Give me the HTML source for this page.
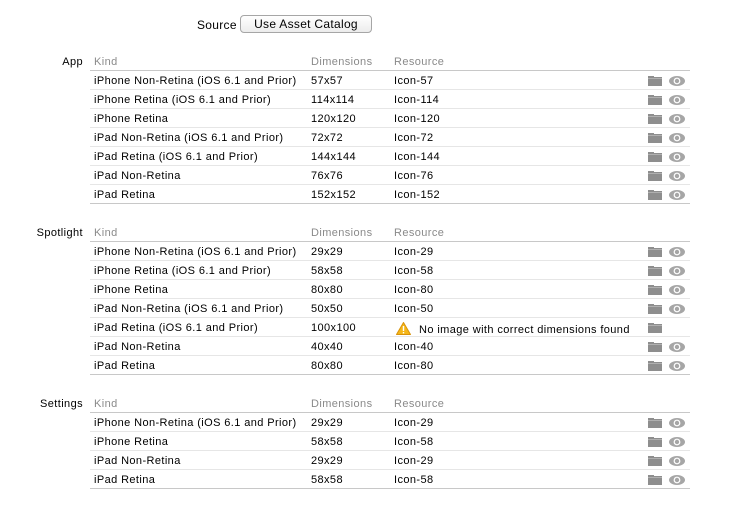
<!DOCTYPE html>
<html><head><meta charset="utf-8"><style>
body{margin:0;width:752px;height:509px;background:#fff;font-family:"Liberation Sans",sans-serif;font-size:11px;color:#000;position:relative;overflow:hidden}
.a{position:absolute;white-space:nowrap;line-height:13px;letter-spacing:0.4px}
.h{color:#8a8a8a}
.ln{position:absolute;left:90px;width:600px;height:1px;background:#e6e6e6}
.ln.d{background:#c8c8c8}
.btn{position:absolute;left:240px;top:15px;width:132px;height:18px;border:1px solid #a6a6a6;border-radius:4px;background:linear-gradient(#fff,#ececec);box-sizing:border-box;text-align:center;line-height:17px;font-size:12px;letter-spacing:0.3px}
</style></head><body>
<div class="a" style="left:197px;top:19px;font-size:12px;letter-spacing:0.3px">Source</div>
<div class="btn">Use Asset Catalog</div>
<div id="c"></div>
<script>
var secs=[
 ["App",61,[["iPhone Non-Retina (iOS 6.1 and Prior)","57x57","Icon-57"],["iPhone Retina (iOS 6.1 and Prior)","114x114","Icon-114"],["iPhone Retina","120x120","Icon-120"],["iPad Non-Retina (iOS 6.1 and Prior)","72x72","Icon-72"],["iPad Retina (iOS 6.1 and Prior)","144x144","Icon-144"],["iPad Non-Retina","76x76","Icon-76"],["iPad Retina","152x152","Icon-152"]]],
 ["Spotlight",232,[["iPhone Non-Retina (iOS 6.1 and Prior)","29x29","Icon-29"],["iPhone Retina (iOS 6.1 and Prior)","58x58","Icon-58"],["iPhone Retina","80x80","Icon-80"],["iPad Non-Retina (iOS 6.1 and Prior)","50x50","Icon-50"],["iPad Retina (iOS 6.1 and Prior)","100x100",null],["iPad Non-Retina","40x40","Icon-40"],["iPad Retina","80x80","Icon-80"]]],
 ["Settings",403,[["iPhone Non-Retina (iOS 6.1 and Prior)","29x29","Icon-29"],["iPhone Retina","58x58","Icon-58"],["iPad Non-Retina","29x29","Icon-29"],["iPad Retina","58x58","Icon-58"]]]
];
var h="";
var folder='<svg width="14" height="10" viewBox="0 0 14 10"><path d="M0 0h6v1h8v9H0z" fill="#8e8e8e"/><rect x="0" y="2" width="14" height="1" fill="#b0b0b0"/></svg>';
var eye='<svg width="16" height="10" viewBox="0 0 16 10"><ellipse cx="8" cy="5" rx="8" ry="5" fill="#a6a6a6"/><circle cx="8" cy="5" r="3.4" fill="#fff"/><circle cx="8" cy="5" r="2.2" fill="#a6a6a6"/></svg>';
secs.forEach(function(s){
 var y=s[1];
 h+='<div class="a" style="right:669px;top:'+(y-5)+'px">'+s[0]+'</div>';
 h+='<div class="a h" style="left:94px;top:'+(y-5)+'px">Kind</div>';
 h+='<div class="a h" style="left:311px;top:'+(y-5)+'px">Dimensions</div>';
 h+='<div class="a h" style="left:394px;top:'+(y-5)+'px">Resource</div>';
 h+='<div class="ln d" style="top:'+(y+9)+'px"></div>';
 s[2].forEach(function(r,i){
  var t=y+9+19*i, c=t+9.5;
  h+='<div class="a" style="left:94px;top:'+(c-5)+'px">'+r[0]+'</div>';
  h+='<div class="a" style="left:311px;top:'+(c-5)+'px">'+r[1]+'</div>';
  if(r[2]) h+='<div class="a" style="left:394px;top:'+(c-5)+'px">'+r[2]+'</div>';
  else h+='<div class="a" style="left:396px;top:'+(c-5)+'px"><svg width="15" height="13" viewBox="0 0 15 13" style="vertical-align:-2px"><path d="M7.5 0.5L14.5 12.5H0.5Z" fill="#f5b719" stroke="#d9930a" stroke-linejoin="round"/><rect x="6.8" y="4" width="1.4" height="5" fill="#fff"/><rect x="6.8" y="10" width="1.4" height="1.4" fill="#fff"/></svg><span style="margin-left:8px">No image with correct dimensions found</span></div>';
  h+='<div class="a" style="left:648px;top:'+(c-4)+'px;line-height:0">'+folder+'</div>';
  if(r[2]) h+='<div class="a" style="left:669px;top:'+(c-4)+'px;line-height:0">'+eye+'</div>';
  var last=i==s[2].length-1;
  h+='<div class="ln'+(last?' d':'')+'" style="top:'+(t+19)+'px"></div>';
 });
});
document.getElementById("c").innerHTML=h;
</script>
</body></html>
